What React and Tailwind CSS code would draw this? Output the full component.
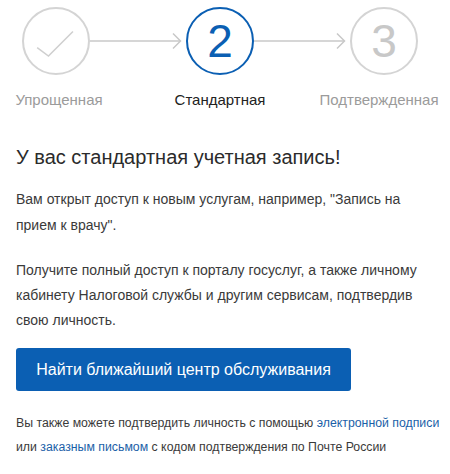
import { Fragment } from 'react';

const steps = [
    { label: 'Упрощенная', state: 'done', shift: 'translate-x-[3px]' },
    { label: 'Стандартная', state: 'active', num: '2', shift: '' },
    { label: 'Подтвержденная', state: 'todo', num: '3', shift: '-translate-x-[5px]' },
];

const Arrow = () => (
    <svg width="96" height="18" viewBox="0 0 96 18" className="shrink-0">
        <line x1="0" y1="9" x2="90" y2="9" stroke="#c8c8c8" strokeWidth="1.5" />
        <polyline points="83,1.5 90.5,9 83,16.5" fill="none" stroke="#c8c8c8" strokeWidth="1.5" />
    </svg>
);

const StepCircle = ({ step }) => {
    if (step.state === 'done') {
        return (
            <div className="w-[68px] h-[68px] rounded-full border-2 border-[#d4d4d4] flex items-center justify-center">
                <svg width="68" height="68" viewBox="0 0 68 68">
                    <polyline points="14,41 26,50 52,24" fill="none" stroke="#cfcfcf" strokeWidth="1.6" />
                </svg>
            </div>
        );
    }
    const active = step.state === 'active';
    return (
        <div
            className={`w-[68px] h-[68px] rounded-full border-2 flex items-center justify-center text-[46px] font-light leading-none ${
                active ? 'border-[#0b5fb3] text-[#0b5fb3]' : 'border-[#d4d4d4] text-[#c8c8c8]'
            }`}
        >
            {step.num}
        </div>
    );
};

export default function App() {
    return (
        <div className="w-[450px] h-[474px] bg-white overflow-hidden font-[family-name:Liberation_Sans,Arial,sans-serif] text-[#3a3a3a]">
            {/* Stepper */}
            <div className="flex items-start pl-[22px] pt-[7px]">
                {steps.map((step, i) => (
                    <Fragment key={step.label}>
                        {i > 0 && (
                            <div className="h-[68px] flex items-center">
                                <Arrow />
                            </div>
                        )}
                        <div className="w-[68px] flex flex-col items-center">
                            <StepCircle step={step} />
                            <div
                                className={`mt-[15px] whitespace-nowrap text-[15px] leading-[20px] ${step.shift} ${
                                    step.state === 'active' ? 'text-[#222]' : 'text-[#9b9b9b]'
                                }`}
                            >
                                {step.label}
                            </div>
                        </div>
                    </Fragment>
                ))}
            </div>

            <div className="px-4">
                <h2 className="mt-[33px] text-[20px] leading-[28px] text-[#2b2b2b]">
                    У вас стандартная учетная запись!
                </h2>

                <p className="mt-[15px] text-[14px] leading-[26px]">
                    Вам открыт доступ к новым услугам, например, "Запись на прием к врачу".
                </p>

                <p className="mt-[20px] text-[14px] leading-[25px]">
                    Получите полный доступ к порталу госуслуг, а также личному кабинету Налоговой службы и другим
                    сервисам, подтвердив свою личность.
                </p>

                <button className="mt-[15px] w-[335px] h-[43px] rounded-[3px] bg-[#0b5fb3] text-white text-[16px]">
                    Найти ближайший центр обслуживания
                </button>

                <p className="mt-[20px] -mr-3 text-[12.3px] leading-[24px]">
                    Вы также можете подтвердить личность с помощью{' '}
                    <a className="text-[#1b5fa8]" href="#">электронной подписи</a> или{' '}
                    <a className="text-[#1b5fa8]" href="#">заказным письмом</a> с кодом подтверждения по Почте России
                </p>
            </div>
        </div>
    );
}
